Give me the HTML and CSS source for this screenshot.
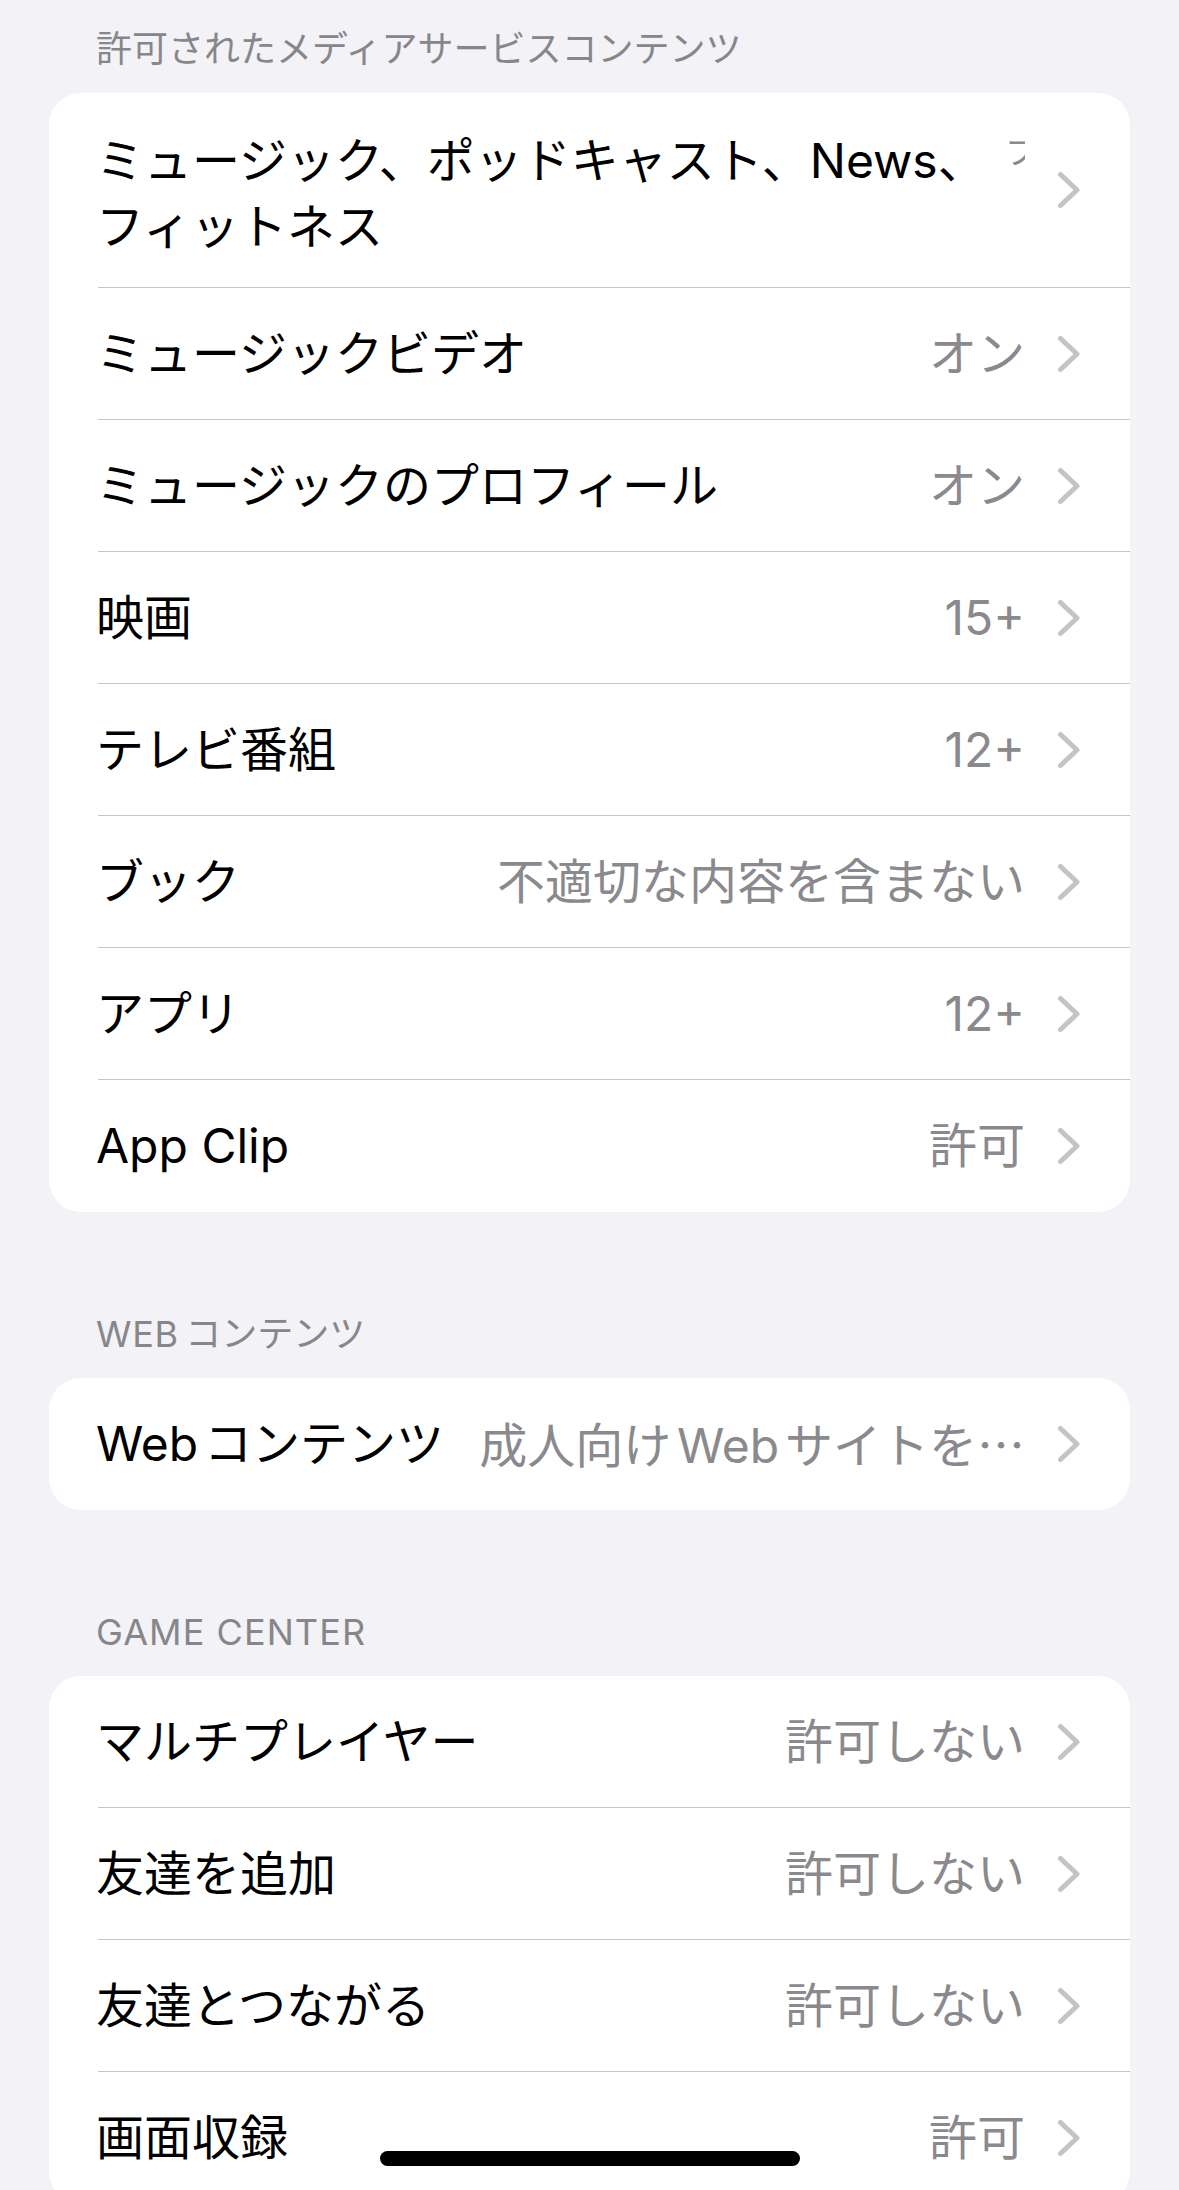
FILE: index.html
```html
<!DOCTYPE html>
<html lang="ja">
<head>
<meta charset="utf-8">
<title>コンテンツ制限</title>
<link rel="stylesheet" href="styles.css">
</head>
<body>
<div class="screen">
  <div class="section-header">許可されたメディアサービスコンテンツ</div>
  <div class="card">
    <div class="row row-multi">
      <div class="row-inner">
        <span class="label label-wrap">ミュージック、ポッドキャスト、<span class="latin">News</span>、フィットネス</span>
        <span class="clip">フ</span>
        <svg class="chev" viewBox="0 0 24 38"><polyline points="3.5,3.5 20,19 3.5,34.5"/></svg>
      </div>
    </div>
    <div class="row"><div class="row-inner"><span class="label">ミュージックビデオ</span><span class="value">オン</span><svg class="chev" viewBox="0 0 24 38"><polyline points="3.5,3.5 20,19 3.5,34.5"/></svg></div></div>
    <div class="row"><div class="row-inner"><span class="label">ミュージックのプロフィール</span><span class="value">オン</span><svg class="chev" viewBox="0 0 24 38"><polyline points="3.5,3.5 20,19 3.5,34.5"/></svg></div></div>
    <div class="row"><div class="row-inner"><span class="label">映画</span><span class="value">15+</span><svg class="chev" viewBox="0 0 24 38"><polyline points="3.5,3.5 20,19 3.5,34.5"/></svg></div></div>
    <div class="row"><div class="row-inner"><span class="label">テレビ番組</span><span class="value">12+</span><svg class="chev" viewBox="0 0 24 38"><polyline points="3.5,3.5 20,19 3.5,34.5"/></svg></div></div>
    <div class="row"><div class="row-inner"><span class="label">ブック</span><span class="value">不適切な内容を含まない</span><svg class="chev" viewBox="0 0 24 38"><polyline points="3.5,3.5 20,19 3.5,34.5"/></svg></div></div>
    <div class="row"><div class="row-inner"><span class="label">アプリ</span><span class="value">12+</span><svg class="chev" viewBox="0 0 24 38"><polyline points="3.5,3.5 20,19 3.5,34.5"/></svg></div></div>
    <div class="row"><div class="row-inner"><span class="label">App Clip</span><span class="value">許可</span><svg class="chev" viewBox="0 0 24 38"><polyline points="3.5,3.5 20,19 3.5,34.5"/></svg></div></div>
  </div>

  <div class="section-header"><span class="latin-h">WEB</span>コンテンツ</div>
  <div class="card">
    <div class="row"><div class="row-inner"><span class="label"><span class="latin-r">Web</span>コンテンツ</span><span class="value">成人向け<span class="latin-m">Web</span>サイトを<span class="cjk">…</span></span><svg class="chev" viewBox="0 0 24 38"><polyline points="3.5,3.5 20,19 3.5,34.5"/></svg></div></div>
  </div>

  <div class="section-header caps">GAME CENTER</div>
  <div class="card">
    <div class="row"><div class="row-inner"><span class="label">マルチプレイヤー</span><span class="value">許可しない</span><svg class="chev" viewBox="0 0 24 38"><polyline points="3.5,3.5 20,19 3.5,34.5"/></svg></div></div>
    <div class="row"><div class="row-inner"><span class="label">友達を追加</span><span class="value">許可しない</span><svg class="chev" viewBox="0 0 24 38"><polyline points="3.5,3.5 20,19 3.5,34.5"/></svg></div></div>
    <div class="row"><div class="row-inner"><span class="label">友達とつながる</span><span class="value">許可しない</span><svg class="chev" viewBox="0 0 24 38"><polyline points="3.5,3.5 20,19 3.5,34.5"/></svg></div></div>
    <div class="row"><div class="row-inner"><span class="label">画面収録</span><span class="value">許可</span><svg class="chev" viewBox="0 0 24 38"><polyline points="3.5,3.5 20,19 3.5,34.5"/></svg></div></div>
  </div>
</div>
<div class="home-indicator"></div>
</body>
</html>
```

FILE: styles.css
```css
html, body {
  margin: 0;
  padding: 0;
}

body {
  background: #f2f2f7;
  font-family: Inter, "Noto Sans CJK JP", sans-serif;
  height: 2190px;
  overflow: hidden;
  -webkit-font-smoothing: antialiased;
}

.screen {
  padding-top: 27px;
}

.section-header {
  font-size: 36px;
  line-height: 44px;
  color: #86868b;
  padding: 0 96px;
  margin-bottom: 22px;
  white-space: nowrap;
}

.section-header.caps {
  letter-spacing: 0.03em;
}

.latin-h {
  margin-right: 0.18em;
  letter-spacing: 0.02em;
}

.card {
  background: #ffffff;
  margin: 0 49px 100px;
  border-radius: 32px;
  overflow: hidden;
}

.row {
  padding-left: 49px;
}

.row-inner {
  display: flex;
  align-items: center;
  box-sizing: border-box;
  height: 132px;
  border-bottom: 1px solid #c6c6c8;
  padding-right: 49px;
}

.row:last-child .row-inner {
  border-bottom: none;
}

.row-multi .row-inner {
  height: auto;
  padding-top: 27px;
  padding-bottom: 27px;
}

.label {
  flex: 1;
  min-width: 0;
  margin-left: -2px;
  font-size: 48px;
  line-height: 66px;
  color: #000000;
  white-space: nowrap;
}

.label-wrap {
  white-space: normal;
  margin-top: 8px;
}

.latin-r {
  margin-right: 0.12em;
}

.latin-m {
  margin: 0 0.12em;
}

.cjk {
  font-family: "Noto Sans CJK JP", sans-serif;
}

.value {
  font-size: 48px;
  line-height: 66px;
  color: #8a8a8e;
  white-space: nowrap;
  margin-left: 24px;
}

.clip {
  align-self: flex-start;
  width: 20px;
  height: 30px;
  overflow: hidden;
  font-size: 32px;
  line-height: 32px;
  color: #8a8a8e;
  margin-top: 17px;
}

.chev {
  flex-shrink: 0;
  width: 24px;
  height: 38px;
  margin-left: 32px;
  fill: none;
  stroke: #c4c4c6;
  stroke-width: 5;
  stroke-linecap: round;
  stroke-linejoin: round;
}

.home-indicator {
  position: fixed;
  left: 50%;
  bottom: 24px;
  width: 420px;
  height: 15px;
  margin-left: -210px;
  border-radius: 8px;
  background: #000000;
}
```
